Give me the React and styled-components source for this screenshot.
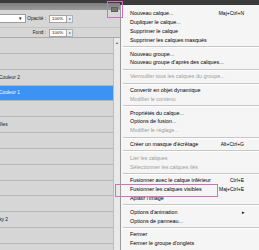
import React from "react";
import styled, { createGlobalStyle } from "styled-components";

const GlobalStyle = createGlobalStyle`
  html, body {
    margin: 0;
    padding: 0;
    background: #d6d6d6;
    overflow: hidden;
  }
  * {
    box-sizing: border-box;
  }
`;

const layers = [
  { name: "" },
  { name: "" },
  { name: "Couleur 2", shift: -1 },
  { name: "Couleur 1", shift: -1, selected: true },
  { name: "" },
  { name: "Feuilles", shift: -9 },
  { name: "" },
  { name: "" },
  { name: "" },
  { name: "" },
  { name: "" },
  { name: "Sky 2", shift: -4 },
  { name: "" },
  { name: "" },
];

const menuGroups = [
  [
    { label: "Nouveau calque...", key: "Maj+Ctrl+N" },
    { label: "Dupliquer le calque..." },
    { label: "Supprimer le calque" },
    { label: "Supprimer les calques masqués" },
  ],
  [
    { label: "Nouveau groupe..." },
    { label: "Nouveau groupe d'après des calques..." },
  ],
  [{ label: "Verrouiller tous les calques du groupe...", disabled: true }],
  [
    { label: "Convertir en objet dynamique" },
    { label: "Modifier le contenu", disabled: true },
  ],
  [
    { label: "Propriétés du calque..." },
    { label: "Options de fusion..." },
    { label: "Modifier le réglage...", disabled: true },
  ],
  [{ label: "Créer un masque d'écrêtage", key: "Alt+Ctrl+G" }],
  [
    { label: "Lier les calques", disabled: true },
    { label: "Sélectionner les calques liés", disabled: true },
  ],
  [
    { label: "Fusionner avec le calque inférieur", key: "Ctrl+E" },
    { label: "Fusionner les calques visibles", key: "Maj+Ctrl+E" },
    { label: "Aplatir l'image" },
  ],
  [
    { label: "Options d'animation", submenu: true },
    { label: "Options de panneau..." },
  ],
  [{ label: "Fermer" }, { label: "Fermer le groupe d'onglets" }],
];

const App = () => {
  return (
    <Screen>
      <GlobalStyle />
      <Panel>
        <TitleBar>
          <FlyoutButton />
        </TitleBar>
        <Options>
          <OptionRow $tall>
            <BlendSelect>
              <Caret>▾</Caret>
            </BlendSelect>
            <FieldLabel>Opacité :</FieldLabel>
            <ValueBox>100%</ValueBox>
            <SpinButton>▸</SpinButton>
          </OptionRow>
          <OptionRow>
            <FieldLabel>Fond :</FieldLabel>
            <ValueBox>100%</ValueBox>
            <SpinButton>▸</SpinButton>
          </OptionRow>
        </Options>
        <LayerArea>
          <LayerList>
            {layers.map((layer, i) => (
              <LayerRow key={i} $selected={layer.selected}>
                <LayerName $shift={layer.shift || 0}>{layer.name}</LayerName>
              </LayerRow>
            ))}
          </LayerList>
          <ScrollTrack>
            <ScrollArrow>▲</ScrollArrow>
          </ScrollTrack>
        </LayerArea>
      </Panel>
      <MenuColumn>
        <MenuTop />
        <Menu>
          {menuGroups.map((group, gi) => (
            <React.Fragment key={gi}>
              {gi > 0 && <Separator />}
              {group.map(item => (
                <MenuItem key={item.label} $disabled={item.disabled}>
                  <ItemLabel>{item.label}</ItemLabel>
                  {item.key && <Shortcut>{item.key}</Shortcut>}
                  {item.submenu && <SubArrow>▸</SubArrow>}
                </MenuItem>
              ))}
            </React.Fragment>
          ))}
        </Menu>
      </MenuColumn>
      <Highlight style={{ left: 107, top: 1, width: 16, height: 17 }} />
      <Highlight style={{ left: 115, top: 184, width: 103, height: 13 }} />
    </Screen>
  );
};

export default App;

const Screen = styled.div`
  position: relative;
  width: 259px;
  height: 250px;
  display: flex;
  overflow: hidden;
  font-family: "Liberation Sans", Arial, sans-serif;
`;

const Panel = styled.div`
  width: 120px;
  flex-shrink: 0;
  display: flex;
  flex-direction: column;
  background: #d6d6d6;
`;

const TitleBar = styled.div`
  height: 10px;
  display: flex;
  justify-content: flex-end;
  align-items: flex-end;
  padding-right: 2px;
  background: linear-gradient(
    to bottom,
    #3b3b3b 0,
    #3b3b3b 3px,
    #7e7e7e 3px,
    #999999 100%
  );
`;

const FlyoutButton = styled.div`
  width: 7px;
  height: 5px;
  margin-bottom: -2px;
  background: #777777;
  border: 1px solid #5e5e5e;
`;

const Options = styled.div`
  display: flex;
  flex-direction: column;
  border-bottom: 1px solid #a9a9a9;
`;

const OptionRow = styled.div`
  height: ${props => (props.$tall ? "18px" : "9px")};
  display: flex;
  align-items: center;
  justify-content: flex-end;
  padding-right: 47px;
  border-bottom: ${props => (props.$tall ? "1px solid #c4c4c4" : "none")};
`;

const BlendSelect = styled.div`
  width: 26px;
  height: 9px;
  margin-right: auto;
  background: #ffffff;
  border: 1px solid #9d9d9d;
  border-left: none;
  display: flex;
  align-items: center;
  justify-content: flex-end;
  padding-right: 3px;
`;

const Caret = styled.span`
  font-size: 5px;
  line-height: 1;
  color: #111111;
`;

const FieldLabel = styled.span`
  font-size: 4.7px;
  color: #1a1a1a;
  margin-right: 3px;
`;

const ValueBox = styled.div`
  width: 18px;
  height: 8px;
  background: #ffffff;
  border: 1px solid #a4a4a4;
  font-size: 4.4px;
  line-height: 6px;
  padding-left: 2px;
  color: #111111;
`;

const SpinButton = styled.div`
  width: 6px;
  height: 8px;
  background: #ececec;
  border: 1px solid #b0b0b0;
  border-left: none;
  font-size: 4px;
  line-height: 6px;
  text-align: center;
  color: #3a64c8;
`;

const LayerArea = styled.div`
  flex: 1;
  display: flex;
  min-height: 0;
`;

const LayerList = styled.div`
  flex: 1;
  display: flex;
  flex-direction: column;
  overflow: hidden;
`;

const LayerRow = styled.div`
  height: 15.85px;
  flex-shrink: 0;
  display: flex;
  align-items: center;
  border-bottom: 1px solid #b6b6b6;
  background: ${props => (props.$selected ? "#3d93f4" : "transparent")};
  color: ${props => (props.$selected ? "#ffffff" : "#161616")};
`;

const LayerName = styled.span`
  font-size: 4.8px;
  white-space: nowrap;
  margin-left: ${props => props.$shift}px;
`;

const ScrollTrack = styled.div`
  width: 7px;
  background: #e9e9e9;
  border-left: 1px solid #bcbcbc;
  display: flex;
  justify-content: center;
`;

const ScrollArrow = styled.span`
  font-size: 3.5px;
  line-height: 1;
  margin-top: 4px;
  color: #555555;
`;

const MenuColumn = styled.div`
  flex: 1;
  display: flex;
  flex-direction: column;
  background: #3b3b3b;
`;

const MenuTop = styled.div`
  height: 5px;
  flex-shrink: 0;
`;

const Menu = styled.div`
  flex: 1;
  background: #f5f5f5;
  border-left: 1px solid #9a9a9a;
  padding-top: 4px;
  display: flex;
  flex-direction: column;
`;

const MenuItem = styled.div`
  height: 8.8px;
  flex-shrink: 0;
  display: flex;
  align-items: center;
  padding-left: 9px;
  padding-right: 15px;
  font-size: 5.4px;
  white-space: nowrap;
  color: ${props => (props.$disabled ? "#9c9c9c" : "#000000")};
`;

const ItemLabel = styled.span`
  flex: 1;
`;

const Shortcut = styled.span`
  font-size: 5px;
`;

const SubArrow = styled.span`
  font-size: 5px;
  margin-right: -1px;
`;

const Separator = styled.div`
  height: 5px;
  flex-shrink: 0;
  margin-left: 2px;
  display: flex;
  align-items: center;

  &::after {
    content: "";
    flex: 1;
    height: 1px;
    background: #c6c6c6;
    box-shadow: 0 1px 0 #ffffff;
  }
`;

const Highlight = styled.div`
  position: absolute;
  border: 1.5px solid #d46fbd;
  pointer-events: none;
`;
